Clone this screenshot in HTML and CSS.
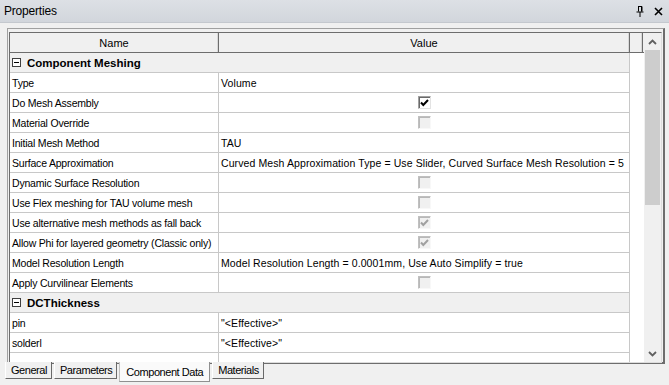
FILE: index.html
```html
<!DOCTYPE html>
<html lang="en">
<head>
    <meta charset="UTF-8">
    <title>Properties</title>
    <link rel="stylesheet" href="styles.css">
</head>
<body>
    <div class="titlebar">
        <span class="title">Properties</span>
        <div class="title-icons">
            <svg class="pin" width="8" height="11" viewBox="0 0 8 11">
                <path d="M2 0.5h4M2.5 0.5v5M5.5 0.5v5M6 0.5v5M0.5 6h7M4 6v5" stroke="#000" stroke-width="1" fill="none"/>
            </svg>
            <svg class="close" width="9" height="9" viewBox="0 0 9 9">
                <path d="M1 1L8 8M8 1L1 8" stroke="#000" stroke-width="1.6" fill="none"/>
            </svg>
        </div>
    </div>

    <div class="frame">
        <div class="grid">
            <div class="table">
                <div class="header">
                    <div class="hcell name-col">Name</div>
                    <div class="hcell value-col">Value</div>
                    <div class="hcell filler"></div>
                </div>
                <div class="body" id="rows"></div>
            </div>
            <div class="scrollbar">
                <div class="arrow">
                    <svg width="9" height="6" viewBox="0 0 9 6"><path d="M1 5L4.5 1.5L8 5" stroke="#606060" stroke-width="1.8" fill="none"/></svg>
                </div>
                <div class="track">
                    <div class="thumb"></div>
                </div>
                <div class="arrow">
                    <svg width="9" height="6" viewBox="0 0 9 6"><path d="M1 1L4.5 4.5L8 1" stroke="#606060" stroke-width="1.8" fill="none"/></svg>
                </div>
            </div>
        </div>
    </div>

    <div class="tabs">
        <div class="tab">General</div>
        <div class="tab">Parameters</div>
        <div class="tab active">Component Data</div>
        <div class="tab">Materials</div>
    </div>

    <script>
        // s = section, t = text, c = checkbox (on, disabled)
        const rows = [
            { s: "Component Meshing" },
            { n: "Type", t: "Volume" },
            { n: "Do Mesh Assembly", c: [true, false] },
            { n: "Material Override", c: [false, true] },
            { n: "Initial Mesh Method", t: "TAU" },
            { n: "Surface Approximation", t: "Curved Mesh Approximation Type = Use Slider, Curved Surface Mesh Resolution = 5" },
            { n: "Dynamic Surface Resolution", c: [false, true] },
            { n: "Use Flex meshing for TAU volume mesh", c: [false, true] },
            { n: "Use alternative mesh methods as fall back", c: [true, true] },
            { n: "Allow Phi for layered geometry (Classic only)", c: [true, true] },
            { n: "Model Resolution Length", t: "Model Resolution Length = 0.0001mm, Use Auto Simplify = true" },
            { n: "Apply Curvilinear Elements", c: [false, true] },
            { s: "DCThickness" },
            { n: "pin", t: "\"<Effective>\"" },
            { n: "solderl", t: "\"<Effective>\"" }
        ];

        const body = document.getElementById('rows');
        const check = '<svg width="9" height="8" viewBox="0 0 9 8"><path d="M1 3.5L3.3 6L8 1" stroke="currentColor" stroke-width="2" fill="none"/></svg>';

        rows.forEach(r => {
            const div = document.createElement('div');
            if (r.s) {
                div.className = 'row section';
                div.innerHTML = `<span class="toggle"></span><b>${r.s}</b>`;
            } else {
                div.className = 'row';
                if (r.c) {
                    const cls = 'checkbox' + (r.c[1] ? ' disabled' : '');
                    const value = `<span class="${cls}">${r.c[0] ? check : ''}</span>`;
                    div.innerHTML = `<div class="cell name-col">${r.n}</div><div class="cell value-col center">${value}</div>`;
                } else {
                    div.innerHTML = `<div class="cell name-col">${r.n}</div><div class="cell value-col">${r.t.replace(/</g, '&lt;')}</div>`;
                }
            }
            body.appendChild(div);
        });

        // last row only shows its top edge
        const partial = document.createElement('div');
        partial.className = 'row';
        partial.innerHTML = '<div class="cell name-col"></div><div class="cell value-col"></div>';
        body.appendChild(partial);
    </script>
</body>
</html>
```

FILE: styles.css
```css
body {
    margin: 0;
    width: 669px;
    height: 385px;
    overflow: hidden;
    background-color: #f0f0f0;
    font-family: "Liberation Sans", Arial, sans-serif;
    font-size: 10.5px;
    color: #000;
}
.titlebar {
    height: 22px;
    display: flex;
    align-items: center;
    justify-content: space-between;
    padding: 0 6px 0 4px;
    background: linear-gradient(#dde0e5, #d2d6dc);
    border-bottom: 1px solid #c4c8ce;
}
.title {
    font-size: 12px;
    letter-spacing: -0.2px;
}
.title-icons {
    display: flex;
    align-items: center;
    gap: 10px;
}
.frame {
    margin: 5px 4px 0 7px;
    padding: 3px 1px 1px 1px;
    border-top: 1px solid #a0a0a0;
    border-left: 1px solid #a0a0a0;
    border-right: 2px solid #6d6d6d;
    border-bottom: 2px solid #6d6d6d;
    height: 336px;
    box-sizing: border-box;
}
.grid {
    display: flex;
    height: 100%;
    border: 1px solid #6d6d6d;
    border-right-color: #dcdcdc;
    border-bottom-color: #dcdcdc;
    background: #fff;
}
.table {
    flex: 1;
    display: flex;
    flex-direction: column;
    overflow: hidden;
}
.header {
    display: flex;
    height: 20px;
    flex: none;
    background: #f0f0f0;
    border-bottom: 1px solid #6d6d6d;
    box-sizing: border-box;
    font-size: 11px;
}
.hcell {
    display: flex;
    align-items: center;
    justify-content: center;
    box-sizing: border-box;
    border-right: 1px solid #6d6d6d;
    box-shadow: inset -1px 0 0 #d8d8d8;
}
.name-col {
    width: 209px;
    flex: none;
}
.value-col {
    width: 411px;
    flex: none;
}
.hcell.filler {
    width: 13px;
}
.body {
    flex: 1;
    overflow: hidden;
}
.row {
    display: flex;
    height: 20px;
    width: 620px;
    box-sizing: border-box;
    border-bottom: 1px solid #c8c8c8;
}
.cell {
    display: flex;
    align-items: center;
    box-sizing: border-box;
    padding-left: 2px;
    border-right: 1px solid #c8c8c8;
    white-space: nowrap;
    overflow: hidden;
}
.name-col.cell {
    letter-spacing: -0.2px;
}
.value-col.cell {
    letter-spacing: 0.1px;
}
.cell.center {
    justify-content: center;
    padding-left: 0;
}
.row.section {
    align-items: center;
    background: #f0f0f0;
    border-right: 1px solid #c8c8c8;
    font-size: 11.5px;
}
.toggle {
    width: 9px;
    height: 9px;
    margin: 0 6px 0 2px;
    border: 1px solid #404040;
    box-sizing: border-box;
    background: #fff;
    position: relative;
}
.toggle::after {
    content: "";
    position: absolute;
    left: 1px;
    top: 3px;
    width: 5px;
    height: 1px;
    background: #000;
}
.checkbox {
    width: 13px;
    height: 13px;
    box-sizing: border-box;
    display: flex;
    align-items: center;
    justify-content: center;
    border: 1px solid #a0a0a0;
    border-right-color: #e3e3e3;
    border-bottom-color: #e3e3e3;
    box-shadow: inset 1px 1px 0 #696969;
    background: #fff;
    color: #000;
}
.checkbox.disabled {
    background: #f0f0f0;
    box-shadow: inset 1px 1px 0 #b8b8b8;
    border-color: #c0c0c0;
    border-right-color: #f8f8f8;
    border-bottom-color: #f8f8f8;
    color: #a0a0a0;
}
.scrollbar {
    width: 17px;
    flex: none;
    display: flex;
    flex-direction: column;
    background: #f0f0f0;
}
.arrow {
    height: 17px;
    flex: none;
    display: flex;
    align-items: center;
    justify-content: center;
}
.track {
    flex: 1;
}
.thumb {
    height: 155px;
    margin: 0 1px;
    background: #cdcdcd;
}
.tabs {
    display: flex;
    gap: 2px;
    padding-left: 5px;
    margin-top: -2px;
}
.tab {
    height: 16px;
    padding: 0 4px 0 5px;
    display: flex;
    align-items: center;
    background: #f0f0f0;
    border-left: 1px solid #ffffff;
    border-right: 1px solid #696969;
    border-bottom: 1px solid #696969;
    font-size: 11px;
    letter-spacing: -0.45px;
    line-height: 1;
}
.tab.active {
    height: 17px;
    padding: 2px 6px 0 6px;
    background: #fafafa;
    border-left: 1px solid #c0c0c0;
    border-right: 1px solid #909090;
    border-bottom: 1px solid #909090;
}
```
